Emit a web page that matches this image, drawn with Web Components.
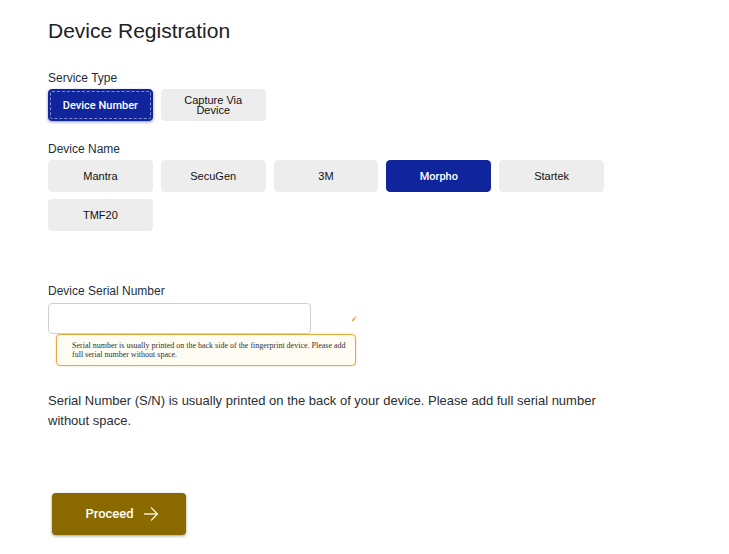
<!DOCTYPE html>
<html lang="en">
<head>
<meta charset="utf-8">
<meta name="viewport" content="width=device-width, initial-scale=1">
<title>Device Registration</title>
<style>
  body { margin: 0; background: #fff; color: #212529; font-family: "Liberation Sans", Arial, sans-serif; }
</style>
</head>
<body>
<registration-page>
  <option-group label="Service Type">
    <option-button selected focus-outline>Device Number</option-button>
    <option-button>Capture Via Device</option-button>
  </option-group>
  <option-group label="Device Name">
    <option-button>Mantra</option-button>
    <option-button>SecuGen</option-button>
    <option-button>3M</option-button>
    <option-button selected>Morpho</option-button>
    <option-button>Startek</option-button>
    <option-button>TMF20</option-button>
  </option-group>
  <serial-field label="Device Serial Number">Serial number is usually printed on the back side of the fingerprint device. Please add full serial number without space.</serial-field>
  <help-text>Serial Number (S/N) is usually printed on the back of your device. Please add full serial number without space.</help-text>
  <proceed-button>Proceed</proceed-button>
</registration-page>

<script>
  class ShadowElement extends HTMLElement {
    constructor() {
      super();
      this.attachShadow({ mode: "open" }).innerHTML = this.constructor.markup;
    }
  }

  customElements.define("registration-page", class extends ShadowElement {
    static markup = `
      <style>
        :host { display: block; padding: 18px 48px 16px; }
        main { display: flex; flex-direction: column; max-width: 556px; }
        h1 { margin: 0 0 26px; font-size: 21px; line-height: 26px; font-weight: 400; color: #202124; }
      </style>
      <main><h1>Device Registration</h1><slot></slot></main>`;
  });

  customElements.define("option-group", class extends ShadowElement {
    static markup = `
      <style>
        :host { display: block; margin-bottom: 20px; }
        .label { font-size: 12px; line-height: 16px; margin-bottom: 3px; color: #1d2f3f; }
        .options { display: grid; grid-template-columns: repeat(5, 1fr); column-gap: 8px; row-gap: 7px; }
      </style>
      <div role="group" aria-labelledby="label">
        <div class="label" id="label"></div>
        <div class="options"><slot></slot></div>
      </div>`;
    connectedCallback() {
      this.shadowRoot.getElementById("label").textContent = this.getAttribute("label");
    }
  });

  customElements.define("option-button", class extends ShadowElement {
    static markup = `
      <style>
        :host { display: block; }
        button {
          box-sizing: border-box; width: 100%; height: 32px; padding: 0 16px;
          border: 1px solid #ededed; border-radius: 4px; background: #ededed; color: #111;
          font: 11px/10px "Liberation Sans", Arial, sans-serif;
        }
        :host([selected]) button {
          padding: 1px 8px 0; background: #10259b; border-color: #10259b; color: #fff;
          font: 500 11px/10px Roboto, sans-serif;
        }
        :host([focus-outline]) button {
          outline: 1px dashed #7f8cd0; outline-offset: -3px;
          box-shadow: 0 1px 3px rgba(16, 37, 155, .5);
        }
      </style>
      <button type="button"><slot></slot></button>`;
    connectedCallback() {
      this.shadowRoot.querySelector("button").setAttribute("aria-pressed", this.hasAttribute("selected"));
    }
  });

  customElements.define("serial-field", class extends ShadowElement {
    static markup = `
      <style>
        :host { display: block; margin: 32px 0 25px; }
        label { display: block; font-size: 12px; line-height: 16px; margin-bottom: 4px; color: #1d2f3f; }
        .row { display: flex; align-items: center; gap: 40px; }
        input {
          box-sizing: border-box; flex: 0 1 263px; min-width: 0; height: 31px; padding: 0 8px;
          border: 1px solid #d0d0d4; border-radius: 4px; background: #fff;
          font: 13px "Liberation Sans", Arial, sans-serif;
        }
        svg { display: block; flex: none; }
        .note {
          box-sizing: border-box; max-width: 300px; min-height: 32px; margin-left: 8px; padding: 6px 8px 6px 15px;
          border: 1px solid #e3a93c; border-radius: 4px; background: #fffcf3;
          box-shadow: 0 0 3px rgba(227, 169, 60, .35);
          color: #333; font: 8px/9px "Liberation Serif", "Times New Roman", serif;
        }
      </style>
      <label for="serial"></label>
      <div class="row">
        <input id="serial" type="text" aria-describedby="note">
        <svg width="6" height="6" viewBox="0 0 6 6" aria-hidden="true">
          <path d="M1.2 5 3.8 2" stroke="#e9a53b" stroke-width="1.8"/>
          <path d="M4.3 1.5 5.2.4" stroke="#f1bd72" stroke-width="1.4"/>
        </svg>
      </div>
      <div class="note" id="note" role="note"><slot></slot></div>`;
    connectedCallback() {
      this.shadowRoot.querySelector("label").textContent = this.getAttribute("label");
    }
  });

  customElements.define("help-text", class extends ShadowElement {
    static markup = `
      <style>
        :host { display: block; }
        p { margin: 0; font-size: 13px; line-height: 20px; color: #2a2e33; }
      </style>
      <p><slot></slot></p>`;
  });

  customElements.define("proceed-button", class extends ShadowElement {
    static markup = `
      <style>
        :host { display: block; margin: 62px 0 0 4px; }
        button {
          display: inline-flex; align-items: center; justify-content: center; gap: 9px;
          box-sizing: border-box; min-width: 134px; height: 42px; padding: 0 26px 0 32px;
          border: 0; border-radius: 4px; background: #8a6900; color: #fffdf2;
          box-shadow: 0 1px 3px rgba(0, 0, 0, .4);
          font: 500 13px/16px Roboto, sans-serif;
        }
      </style>
      <button type="button"><slot></slot>
        <svg width="16" height="16" viewBox="0 0 16 16" fill="none" stroke="#f7efcf" stroke-width="1.3" stroke-linecap="round" stroke-linejoin="round" aria-hidden="true">
          <path d="M1.5 8h13M8.5 2l6 6-6 6"/>
        </svg>
      </button>`;
  });
</script>
</body>
</html>
